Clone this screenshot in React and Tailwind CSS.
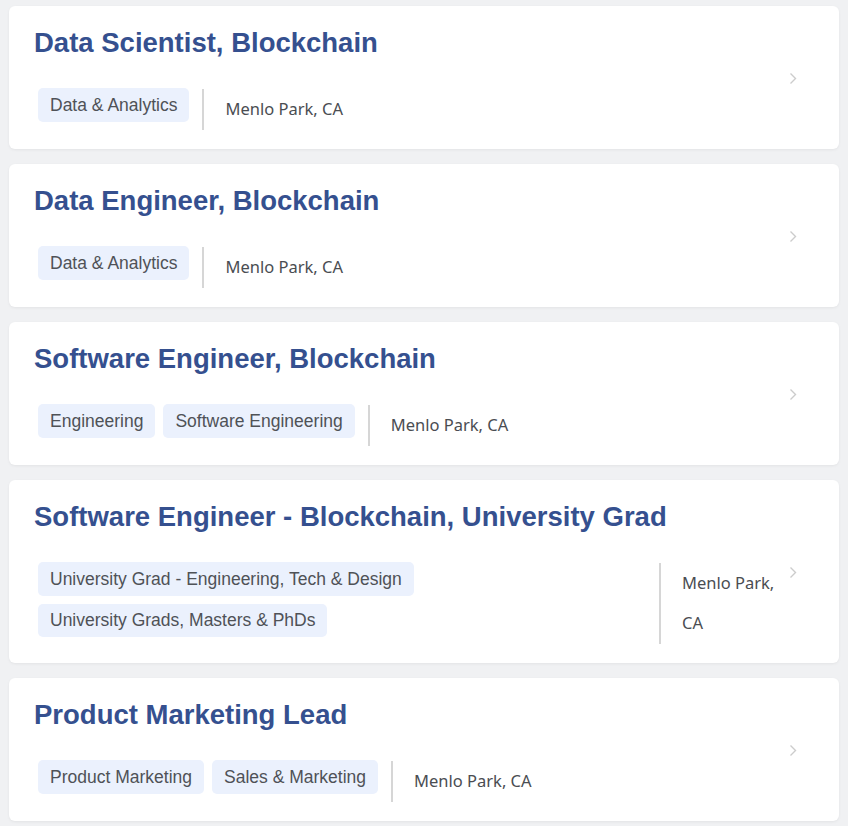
import React from "react";

const jobs = [
  { title: "Data Scientist, Blockchain", tags: ["Data & Analytics"] },
  { title: "Data Engineer, Blockchain", tags: ["Data & Analytics"] },
  { title: "Software Engineer, Blockchain", tags: ["Engineering", "Software Engineering"] },
  {
    title: "Software Engineer - Blockchain, University Grad",
    tags: ["University Grad - Engineering, Tech & Design", "University Grads, Masters & PhDs"],
    wide: true,
  },
  { title: "Product Marketing Lead", tags: ["Product Marketing", "Sales & Marketing"] },
];

function Chevron() {
  return (
    <svg width="8" height="13" viewBox="0 0 8 13" fill="none">
      <path d="M1.5 1.5L6.5 6.5L1.5 11.5" stroke="#cccccc" strokeWidth="1.4" />
    </svg>
  );
}

export default function App() {
  return (
    <div className="min-h-[826px] bg-[#f0f1f3] px-[9px] pt-[6px] pb-[4px] flex flex-col gap-[15px]">
      {jobs.map((job, i) => (
        <div
          key={i}
          className="bg-white rounded-[6px] shadow-[0_1px_3px_rgba(0,0,0,0.06)] flex items-center pl-[25px] pr-[42px] pt-[21px] pb-[19px]"
        >
          <div className="flex-1 min-w-0">
            <h2 className="font-['Liberation_Sans',Arial,sans-serif] font-bold text-[27.5px] leading-[32px] text-[#35508f]">
              {job.title}
            </h2>
            <div className="flex items-start mt-[29px] pl-[4px]">
              <div className={`flex flex-wrap gap-[8px] pr-[13px] ${job.wide ? "w-[621px]" : ""}`}>
                {job.tags.map((t) => (
                  <span
                    key={t}
                    className="bg-[#ebf1fd] rounded-[5px] px-[12px] h-[33.5px] flex items-center font-['Liberation_Sans',Arial,sans-serif] text-[17.5px] text-[#4f5257]"
                  >
                    {t}
                  </span>
                ))}
              </div>
              <div
                className={`border-l-2 border-[#d6d6d6] pl-[21px] pt-0 pb-[1px] mt-[1px] font-['Noto_Sans',sans-serif] text-[16.5px] leading-[40px] text-[#4a4d52] ${job.wide ? "w-[120px]" : ""}`}
              >
                Menlo Park, CA
              </div>
            </div>
          </div>
          <Chevron />
        </div>
      ))}
    </div>
  );
}
